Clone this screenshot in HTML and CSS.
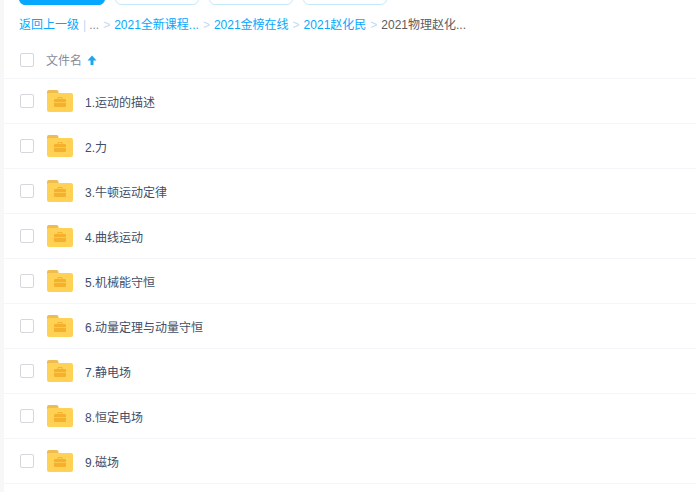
FILE: index.html
```html
<!DOCTYPE html>
<html lang="zh">
<head>
<meta charset="utf-8">
<link rel="stylesheet" href="styles.css">
<title>文件列表</title>
</head>
<body>
<svg class="defs" width="0" height="0" aria-hidden="true">
  <symbol id="folder" viewBox="0 0 26 22">
    <path d="M0 2a2 2 0 0 1 2-2h7.500a2 2 0 0 1 2 2v2H0z" fill="#eebc50"/>
    <path d="M0 5a2 2 0 0 1 2-2h22a2 2 0 0 1 2 2v15a2 2 0 0 1-2 2H2a2 2 0 0 1-2-2z" fill="#ffd255"/>
    <path d="M10.500 9V8a1 1 0 0 1 1-1h3a1 1 0 0 1 1 1v1H18a1 1 0 0 1 1 1v2.200H7V10a1 1 0 0 1 1-1zm1 0h3V8h-3z" fill="#f5b02e"/>
    <path d="M7 13h12v3a1 1 0 0 1-1 1H8a1 1 0 0 1-1-1z" fill="#f5b02e"/>
  </symbol>
</svg>
<div class="page">
  <aside class="gutter"></aside>
  <main class="content">
    <div class="toolbar">
      <span class="btn primary"></span>
      <span class="btn"></span>
      <span class="btn"></span>
      <span class="btn"></span>
    </div>
    <nav class="crumbs">
      <a>返回上一级</a><span class="bar">|</span><span class="dots">...</span><span class="sep">&gt;</span><a>2021全新课程...</a><span class="sep">&gt;</span><a>2021金榜在线</a><span class="sep">&gt;</span><a>2021赵化民</a><span class="sep">&gt;</span><span class="current">2021物理赵化...</span>
    </nav>
    <div class="row head">
      <span class="check"></span>
      <span class="head-name">文件名</span>
      <svg class="arrow" width="10" height="10" viewBox="0 0 10 10"><path d="M5 0.500 9.500 5.500H6.500V10H3.500V5.500H0.500z" fill="#1aa7f0"/></svg>
    </div>
    <div class="row item"><span class="check"></span><svg class="folder"><use href="#folder"/></svg><span class="name">1.运动的描述</span></div>
    <div class="row item"><span class="check"></span><svg class="folder"><use href="#folder"/></svg><span class="name">2.力</span></div>
    <div class="row item"><span class="check"></span><svg class="folder"><use href="#folder"/></svg><span class="name">3.牛顿运动定律</span></div>
    <div class="row item"><span class="check"></span><svg class="folder"><use href="#folder"/></svg><span class="name">4.曲线运动</span></div>
    <div class="row item"><span class="check"></span><svg class="folder"><use href="#folder"/></svg><span class="name">5.机械能守恒</span></div>
    <div class="row item"><span class="check"></span><svg class="folder"><use href="#folder"/></svg><span class="name">6.动量定理与动量守恒</span></div>
    <div class="row item"><span class="check"></span><svg class="folder"><use href="#folder"/></svg><span class="name">7.静电场</span></div>
    <div class="row item"><span class="check"></span><svg class="folder"><use href="#folder"/></svg><span class="name">8.恒定电场</span></div>
    <div class="row item"><span class="check"></span><svg class="folder"><use href="#folder"/></svg><span class="name">9.磁场</span></div>
  </main>
</div>
</body>
</html>
```
FILE: styles.css
```css
* { box-sizing: border-box; }
html, body { margin: 0; height: 100%; overflow: hidden; background: #fff; }
body { font-family: "Liberation Sans", "Noto Sans CJK SC", sans-serif; font-size: 12px; color: #424e67; }
.defs { position: absolute; }
.page { display: flex; height: 492px; }
.gutter { width: 4px; background: #f7f7f7; flex: none; }
.content { flex: 1; min-width: 0; }
.toolbar { display: flex; gap: 10px; height: 5px; padding-left: 15px; overflow: hidden; }
.btn { display: block; flex: none; width: 84px; height: 21px; margin-top: -16px; background: #fff; border: 1px solid #c5e9fb; border-radius: 6px; }
.btn.primary { width: 86px; background: #06a7ff; border-color: #06a7ff; }
.crumbs { display: flex; align-items: center; height: 32px; margin-top: 4px; padding-left: 15px; white-space: nowrap; line-height: 32px; }
.crumbs a { color: #06a7ff; }
.bar { color: #c4d8f4; margin: 0 3px 0 4px; }
.dots { color: #818999; }
.sep { color: #c4d8f4; margin: 0 4px; }
.current { color: #5c5c5c; }
.row { display: flex; align-items: center; padding-left: 16px; }
.head { height: 38px; border-bottom: 1px solid #f3f5f9; }
.item { height: 45px; border-bottom: 1px solid #f3f5f9; }
.check { width: 14px; height: 14px; flex: none; border: 1px solid #d4d7de; border-radius: 2px; background: #fff; }
.head-name { margin-left: 12px; color: #878c9c; }
.arrow { margin-left: 5px; }
.folder { width: 26px; height: 22px; flex: none; margin-left: 13px; }
.name { margin-left: 12px; }
```
